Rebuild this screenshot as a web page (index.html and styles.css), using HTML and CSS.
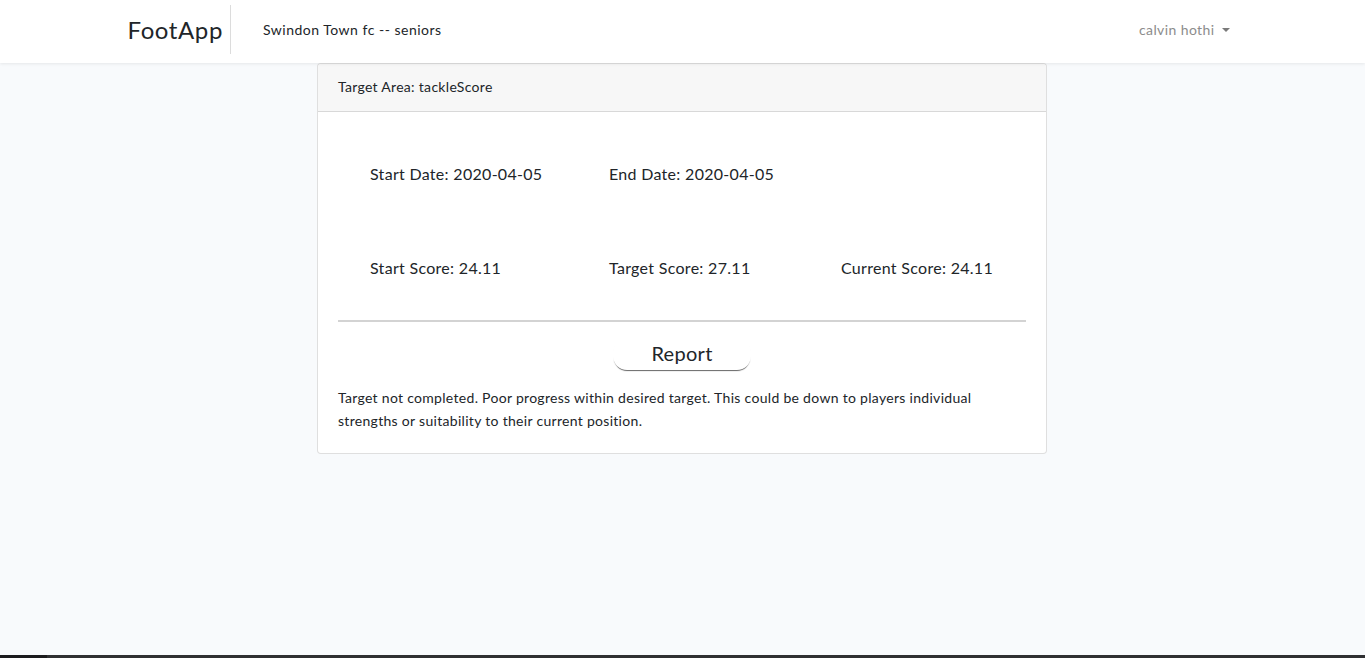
FILE: index.html
```html
<!DOCTYPE html>
<html lang="en">
<head>
<meta charset="utf-8">
<title>FootApp</title>
<link rel="stylesheet" href="styles.css">
</head>
<body>
<div class="screen">
  <nav class="navbar">
    <div class="nav-inner">
      <a class="brand" href="#">FootApp</a>
      <span class="team">Swindon Town fc -- seniors</span>
      <a class="user dropdown-toggle" href="#">calvin hothi</a>
    </div>
  </nav>
  <main class="main">
    <div class="card">
      <div class="card-header">Target Area: tackleScore</div>
      <div class="card-body">
        <div class="stats dates">
          <span>Start Date: 2020-04-05</span>
          <span>End Date: 2020-04-05</span>
          <span></span>
        </div>
        <div class="stats scores">
          <span>Start Score: 24.11</span>
          <span>Target Score: 27.11</span>
          <span>Current Score: 24.11</span>
        </div>
        <hr class="divider">
        <div class="report-wrap"><div class="report">Report</div></div>
        <p class="summary">Target not completed. Poor progress within desired target. This could be down to players individual strengths or suitability to their current position.</p>
      </div>
    </div>
  </main>
</div>
<div class="taskbar"></div>
</body>
</html>
```
FILE: styles.css
```css
* { box-sizing: border-box; }
html, body { margin: 0; padding: 0; background: #fff; }
body {
  font-family: Lato, "Noto Sans", sans-serif;
  color: #212529;
  font-size: 14px;
  letter-spacing: 0.3px;
}
.screen {
  width: 1365px;
  height: 655px;
  background: #f8fafc;
  overflow: hidden;
}
.taskbar {
  width: 1365px;
  height: 3px;
  background: #2f3032;
  border-left: 47px solid #1b1b1d;
}
.navbar {
  height: 63px;
  background: #fff;
  box-shadow: 0 1px 3px rgba(0,0,0,0.08);
  position: relative;
  z-index: 1;
}
.nav-inner {
  max-width: 1140px;
  margin: 0 auto;
  padding: 0 15px 4px;
  height: 63px;
  display: flex;
  align-items: center;
}
.brand {
  font-size: 24px;
  letter-spacing: 0.6px;
  color: #212529;
  text-decoration: none;
  padding-right: 7px;
  height: 49px;
  line-height: 49px;
  border-right: 1px solid #dcdcdc;
}
.team {
  margin-left: 32px;
  font-size: 14px;
  letter-spacing: 0.5px;
  color: #212529;
}
.user {
  margin-left: auto;
  padding: 8px;
  color: #8c8c8c;
  text-decoration: none;
  font-size: 14px;
  letter-spacing: 0.4px;
  display: flex;
  align-items: center;
}
.dropdown-toggle::after {
  content: "";
  display: inline-block;
  margin-left: 7px;
  border-top: 4px solid #7a7a7a;
  border-left: 4px solid transparent;
  border-right: 4px solid transparent;
}
.main {
  display: flex;
  justify-content: center;
  padding-right: 1px;
}
.card {
  width: 730px;
  background: #fff;
  border: 1px solid rgba(0,0,0,0.125);
  border-radius: 4px;
}
.card-header {
  background: #f7f7f7;
  border-bottom: 1px solid rgba(0,0,0,0.125);
  height: 48px;
  padding: 0 20px 2px;
  display: flex;
  align-items: center;
  font-size: 14px;
  border-radius: 4px 4px 0 0;
}
.card-body {
  padding: 20px 20px 21px;
}
.stats {
  display: grid;
  grid-template-columns: 239px 232px 1fr;
  padding-left: 32px;
  font-size: 16px;
  line-height: 24px;
}
.dates { margin-top: 30px; }
.scores { margin-top: 70px; }
.divider {
  margin: 40px 0 0;
  border: 0;
  border-top: 2px solid #d3d3d3;
  height: 0;
}
.report-wrap {
  display: flex;
  justify-content: center;
  margin-top: 16px;
}
.report {
  width: 138px;
  height: 32px;
  border-radius: 14px;
  background: #fff;
  box-shadow: 0 2px 1px -1px rgba(0,0,0,0.6);
  text-align: center;
  font-size: 20px;
  line-height: 31px;
}
.summary {
  margin: 16px 0 0;
  font-size: 14px;
  line-height: 23px;
}
```
